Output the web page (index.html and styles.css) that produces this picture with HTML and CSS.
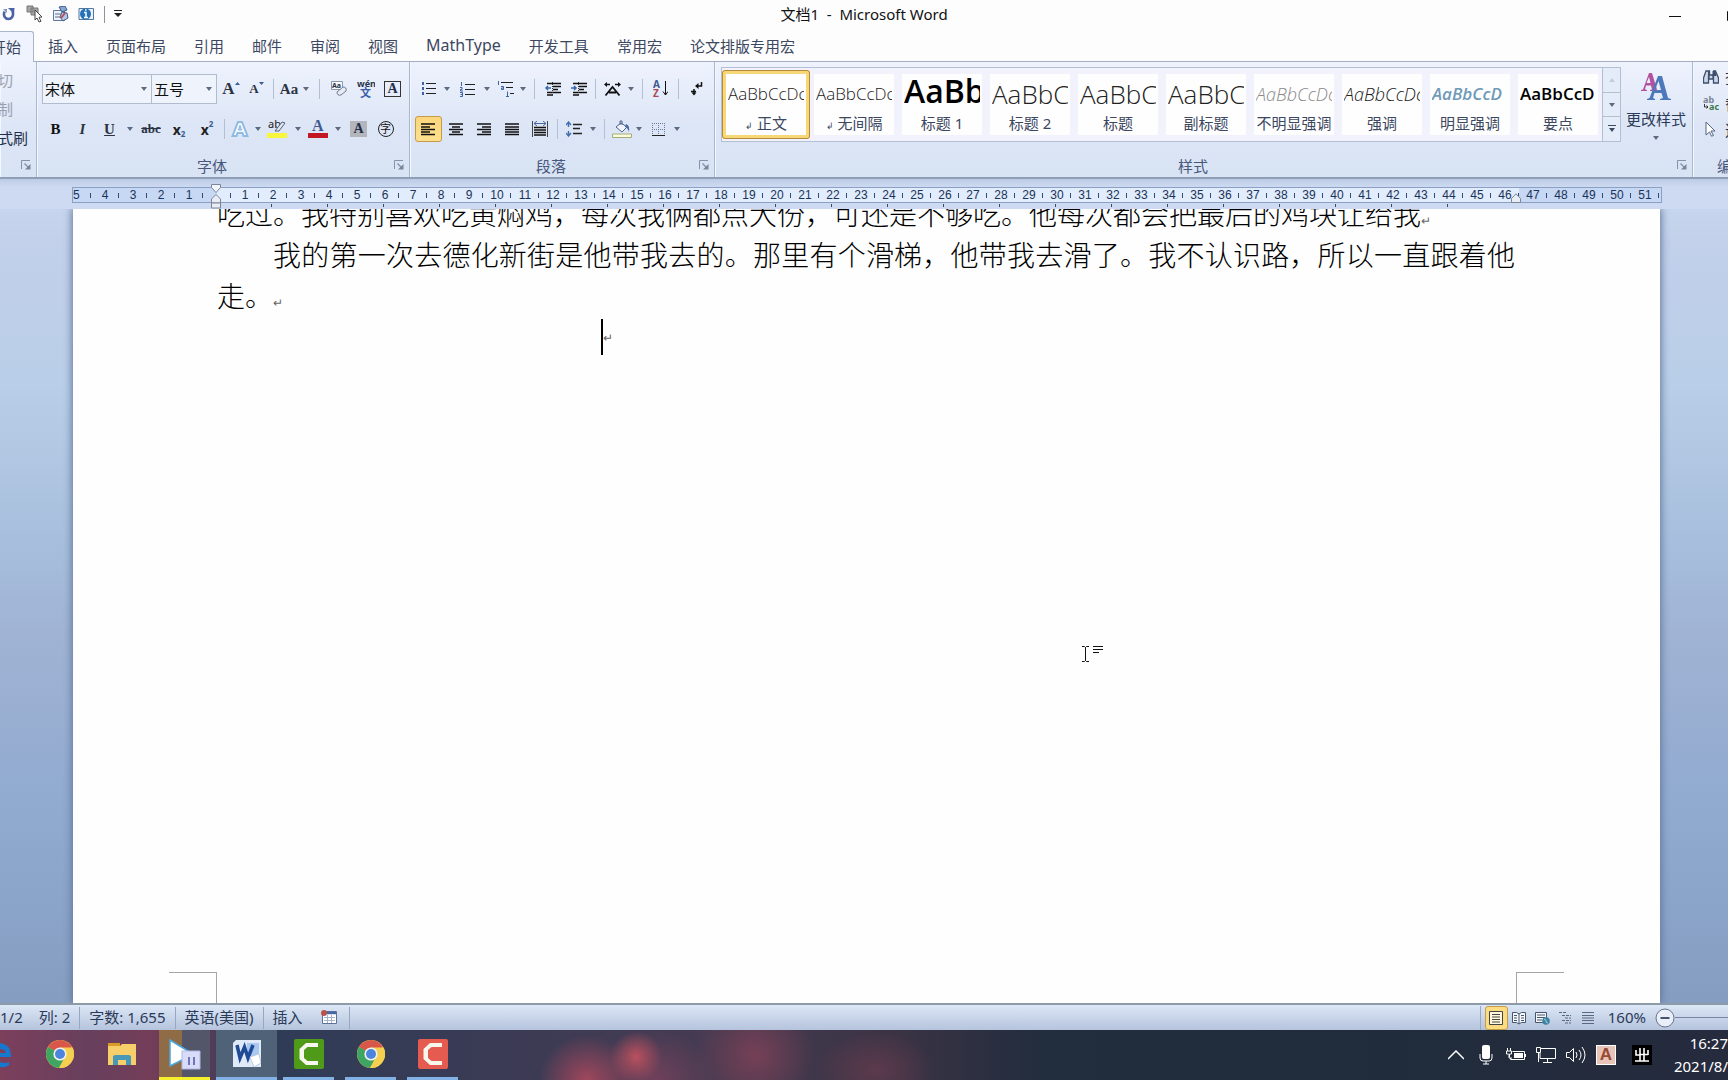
FILE: index.html
```html
<!DOCTYPE html>
<html lang="zh-CN">
<head>
<meta charset="utf-8">
<title>文档1 - Microsoft Word</title>
<link rel="stylesheet" href="styles.css">
</head>
<body>
<svg class="defs" aria-hidden="true">
  <defs>
    <symbol id="caret" viewBox="0 0 6 4"><path d="M0 0h6L3 4z" fill="#5c6b80"/></symbol>
    <symbol id="launch" viewBox="0 0 10 10"><path d="M.5 9V.5H9" fill="none" stroke="#8793a8"/><path d="M3.500 3.500l4 4" stroke="#8793a8" stroke-width="1.500"/><path d="M9.500 4v5.500H4z" fill="#78859c"/></symbol>
    <symbol id="chrome" viewBox="0 0 28 28"><circle cx="14" cy="14" r="14" fill="#f5cf50"/><path d="M14 14L1.900 7A14 14 0 0 1 26.100 7z" fill="#d9564a"/><path d="M1.900 7A14 14 0 0 0 13 28l6-11-5-3z" fill="#3fa562"/><path d="M1.900 7l6 10.500L14 14z" fill="#3fa562"/><path d="M14 7.500h12.400A14 14 0 0 1 13 28l6.500-11z" fill="#f5cf50"/><circle cx="14" cy="14" r="6.600" fill="#f3f1ee"/><circle cx="14" cy="14" r="5" fill="#4d84dd"/></symbol>
    <symbol id="camtasia" viewBox="0 0 30 30"><path d="M24 4H12L5.500 10v10L12 26h12v-4H13.500l-3.500-3v-8l3.500-3H24z" fill="#f7f7ee"/></symbol>
  </defs>
</svg>
<div class="app">
  <header class="titlebar">
    <div class="quick">
      <button aria-label="重复"><svg width="14" height="14" viewBox="0 0 14 14"><path d="M2.500 4.500C1 9 3 12 6.500 12S12 8.500 10.500 4" fill="none" stroke="#4a63a8" stroke-width="2.600"/><path d="M6 1l6.500 0-.5 6z" fill="#4a63a8"/><path d="M1 2h4v4z" fill="#7f94c8"/></svg></button>
      <button aria-label="选择多个对象"><svg width="18" height="18" viewBox="0 0 18 18"><path d="M1 1h6v6H1zM5 3h7v7H5z" fill="#a5a5a5" stroke="#777"/><path d="M9 5l7 7-3 .3 2 4-2 .7-2-4-2 2z" fill="#fff" stroke="#444"/></svg></button>
      <button aria-label="宏"><svg width="17" height="17" viewBox="0 0 17 17"><path d="M1.500 4.500h11v10h-11z" fill="#eef3fb" stroke="#60779f"/><path d="M3 8h7M3 11h5" stroke="#5d7196"/><path d="M7 1l6-1 2 4-5 2z" fill="#86a7d3" stroke="#3e5d8d"/><path d="M10 6l5 1 1 5-5 3-3-4z" fill="#b6c7e2" stroke="#3e5d8d"/><path d="M9 12l4-5" stroke="#bd4d53" stroke-width="2"/></svg></button>
      <button aria-label="文档信息"><svg width="17" height="16" viewBox="0 0 17 16"><path d="M1 2.500h8v11H1zM9 2.500h6.500v11H9z" fill="#e9f1fb" stroke="#55769e"/><circle cx="7.500" cy="8" r="5.500" fill="#2672b8"/><path d="M6 6.500h2V11m-2 .500h4M7 4h1.500" stroke="#fff" stroke-width="1.500" fill="none"/></svg></button>
      <span class="qsep"></span>
      <button aria-label="自定义快速访问工具栏" class="more"><svg width="8" height="8" viewBox="0 0 8 8"><path d="M0 .5h8" stroke="#222"/><path d="M0 3h8L4 7z" fill="#222"/></svg></button>
    </div>
    <h1>文档1&nbsp; - &nbsp;Microsoft Word</h1>
    <div class="winbtns">
      <button aria-label="最小化"><svg width="12" height="12" viewBox="0 0 12 12"><path d="M0 6.500h12" stroke="#111"/></svg></button>
      <button aria-label="最大化" class="max"><svg width="10" height="10" viewBox="0 0 10 10"><path d="M.5 .5h9v9h-9z" fill="none" stroke="#111"/></svg></button>
    </div>
  </header>

  <nav class="tabs">
    <button class="active"><span>开始</span></button>
    <button>插入</button><button>页面布局</button><button>引用</button><button>邮件</button><button>审阅</button><button>视图</button><button class="latin">MathType</button><button>开发工具</button><button>常用宏</button><button>论文排版专用宏</button>
  </nav>

  <div class="ribbon">
    <section class="group clip">
      <div class="cliplist"><button class="off">剪切</button><button class="off">复制</button><button>格式刷</button></div>
      <footer><span></span><button class="launcher" aria-label="剪贴板选项"><svg width="10" height="10"><use href="#launch"/></svg></button></footer>
    </section>

    <section class="group font">
      <div class="rows">
        <div class="row">
          <div class="combo face"><input aria-label="字体" value="宋体"><svg width="6" height="4"><use href="#caret"/></svg></div>
          <div class="combo size"><input aria-label="字号" value="五号"><svg width="6" height="4"><use href="#caret"/></svg></div>
          <button class="w24 serif" aria-label="增大字体">A<svg class="sup" width="5" height="4" viewBox="0 0 5 4"><path d="M0 3l2.500-3L5 3z" fill="#3a5c93"/></svg></button>
          <button class="w27 serif small" aria-label="缩小字体">A<svg class="sup" width="5" height="4" viewBox="0 0 5 4"><path d="M0 0h5L2.500 3z" fill="#3a5c93"/></svg></button>
          <i class="sep s6"></i>
          <button class="w37 serif mid" aria-label="更改大小写">Aa<svg width="6" height="4"><use href="#caret"/></svg></button>
          <i class="sep s12"></i>
          <button class="w27" aria-label="清除格式"><svg width="18" height="18" viewBox="0 0 18 18"><path d="M1.500 1.500h11v8h-11z" fill="#f5f8fd" stroke="#8c97aa"/><text x="2" y="8" class="t7">Aa</text><path d="M7 12l6-5q4 0 3 4l-5 4q-4 1-4-3z" fill="#e8ebf1" stroke="#6d7a90"/></svg></button>
          <button class="w27" aria-label="拼音指南"><svg width="18" height="18" viewBox="0 0 18 18"><text x="0" y="7" class="t8">wén</text><text x="3" y="17" class="t11">文</text></svg></button>
          <button class="w27" aria-label="字符边框"><span class="boxed">A</span></button>
        </div>
        <div class="row">
          <button class="w27 serif mid heavy" aria-label="加粗">B</button>
          <button class="w27 serif mid ital" aria-label="倾斜">I</button>
          <button class="w27 serif mid under" aria-label="下划线">U</button>
          <button class="w14" aria-label="下划线样式"><svg width="6" height="4"><use href="#caret"/></svg></button>
          <button class="w28 serif strike" aria-label="删除线">abc</button>
          <button class="w28 xs" aria-label="下标">x<sub>2</sub></button>
          <button class="w28 xs" aria-label="上标">x<sup>2</sup></button>
          <i class="sep s6"></i>
          <button class="w26" aria-label="文本效果"><svg width="18" height="18" viewBox="0 0 18 18"><path d="M1.500 16L7 2h4l5.500 14h-4l-1-3h-5l-1 3z" fill="#f4f9ff" stroke="#8fbbe0" stroke-width="2"/><path d="M7.500 10L9 5.500l1.500 4.500z" fill="#cfe0f4" stroke="#7db1dd"/></svg></button>
          <button class="w10" aria-label="文本效果选项"><svg width="6" height="4"><use href="#caret"/></svg></button>
          <button class="w28" aria-label="突出显示"><svg width="22" height="20" viewBox="0 0 22 20"><text x="2" y="9" class="t11 dark">ab</text><path d="M9 12l7-9 3 1-6 8z" fill="#dfe7f4" stroke="#516079"/><path d="M1 14h20v5H1z" fill="#f8f53c"/></svg></button>
          <button class="w14" aria-label="突出显示颜色"><svg width="6" height="4"><use href="#caret"/></svg></button>
          <button class="w26" aria-label="字体颜色"><svg width="20" height="20" viewBox="0 0 20 20"><text x="4" y="12" class="t16 blue">A</text><path d="M0 14h20v5H0z" fill="#c21824"/></svg></button>
          <button class="w14" aria-label="字体颜色选项"><svg width="6" height="4"><use href="#caret"/></svg></button>
          <button class="w27" aria-label="字符底纹"><span class="shaded">A</span></button>
          <button class="w27" aria-label="带圈字符"><span class="circled">字</span></button>
        </div>
      </div>
      <footer><span>字体</span><button class="launcher" aria-label="字体选项"><svg width="10" height="10"><use href="#launch"/></svg></button></footer>
    </section>

    <section class="group para">
      <div class="rows">
        <div class="row">
          <button class="w27" aria-label="项目符号"><svg width="14" height="14" viewBox="0 0 14 14"><path d="M4 1.500h10M4 6.500h10M4 11.500h10" stroke="#222"/><path d="M0 0h2v3H0zM0 5h2v3H0zM0 10h2v3H0z" fill="#3d62a5"/></svg></button>
          <button class="w10" aria-label="项目符号库"><svg width="6" height="4"><use href="#caret"/></svg></button>
          <button class="w30" aria-label="编号"><svg width="15" height="15" viewBox="0 0 15 15"><path d="M5 2.500h10M5 7.500h10M5 12.500h10" stroke="#222"/><path d="M1.500 0v4M0 5.500h2v2H.5v1.500H3M0 10.500h2.500v4H0m.5-2h2" stroke="#3d62a5" fill="none"/></svg></button>
          <button class="w10" aria-label="编号库"><svg width="6" height="4"><use href="#caret"/></svg></button>
          <button class="w26" aria-label="多级列表"><svg width="17" height="16" viewBox="0 0 17 16"><path d="M4 1.500h12M9 6.500h7M13 12.500h4" stroke="#222"/><path d="M1.500 0v4M4 5.500h2.500v3H4.500V7H6M10.500 10.500v5M9 15.500h3" stroke="#3d62a5" fill="none"/></svg></button>
          <button class="w10" aria-label="多级列表库"><svg width="6" height="4"><use href="#caret"/></svg></button>
          <i class="sep s12"></i>
          <button class="w26" aria-label="减少缩进量"><svg width="16" height="16" viewBox="0 0 16 16"><path d="M2 2.500h14M8 5.500h8M8 8.500h5M2 11.500h14M2 14h6" stroke="#111" stroke-width="1.500"/><path d="M7.500 1v14" stroke="#333" stroke-dasharray="1 1"/><path d="M6 7H1m2-2L1 7l2 2" stroke="#3569ad" stroke-width="1.500" fill="none"/></svg></button>
          <button class="w26" aria-label="增加缩进量"><svg width="16" height="16" viewBox="0 0 16 16"><path d="M2 2.500h14M8 5.500h8M8 8.500h5M2 11.500h14M2 14h6" stroke="#111" stroke-width="1.500"/><path d="M7.500 1v14" stroke="#333" stroke-dasharray="1 1"/><path d="M0 7h5M3 5l2 2-2 2" stroke="#3569ad" stroke-width="1.500" fill="none"/></svg></button>
          <i class="sep s6"></i>
          <button class="w28" aria-label="中文版式"><svg width="17" height="15" viewBox="0 0 17 15"><path d="M1.500 13.500L8.500 5l7 8.500M5 10.500h7" stroke="#111" stroke-width="1.800" fill="none"/><path d="M2 2.500h4M15 2.500h-4" stroke="#111" stroke-width="1.500"/><path d="M0 2.500L3 0v5zM17 2.500L14 0v5z" fill="#111"/></svg></button>
          <button class="w10" aria-label="中文版式选项"><svg width="6" height="4"><use href="#caret"/></svg></button>
          <i class="sep s12"></i>
          <button class="w24" aria-label="排序"><svg width="15" height="18" viewBox="0 0 15 18"><text x="0" y="8" class="t10 blue">A</text><text x="0" y="17" class="t10 red">Z</text><path d="M12.500 1v14M10 11.500l2.500 3.500 2.500-3.500" stroke="#111" fill="none"/></svg></button>
          <i class="sep s12"></i>
          <button class="w26" aria-label="显示编辑标记"><svg width="12" height="14" viewBox="0 0 12 14"><path d="M10.500 0v4H6M5 9.500H0M3 7v5" stroke="#111" fill="none" stroke-width="1.500"/><path d="M4 4l3.500-3v6zM3 13.500L.5 10.500h5z" fill="#111"/></svg></button>
        </div>
        <div class="row">
          <button class="w27 on" aria-label="左对齐"><svg width="15" height="13" viewBox="0 0 15 13"><path d="M0 1h14M0 4h9M0 6.500h14M0 9h9M0 11.500h14" stroke="#111" stroke-width="1.400"/></svg></button>
          <button class="w28" aria-label="居中"><svg width="14" height="13" viewBox="0 0 14 13"><path d="M0 1h14M3 4h8M0 6.500h14M3 9h8M0 11.500h14" stroke="#111" stroke-width="1.400"/></svg></button>
          <button class="w28" aria-label="右对齐"><svg width="14" height="13" viewBox="0 0 14 13"><path d="M0 1h14M5 4h9M0 6.500h14M5 9h9M0 11.500h14" stroke="#111" stroke-width="1.400"/></svg></button>
          <button class="w28" aria-label="两端对齐"><svg width="14" height="13" viewBox="0 0 14 13"><path d="M0 1h14M0 4h14M0 6.500h14M0 9h14M0 11.500h14" stroke="#111" stroke-width="1.400"/></svg></button>
          <button class="w28" aria-label="分散对齐"><svg width="16" height="16" viewBox="0 0 16 16"><path d="M2 6.500h12M2 9h12M2 11.500h12M2 14h12" stroke="#111" stroke-width="1.400"/><path d="M.5 0v16M15.500 0v16" stroke="#444"/><path d="M2 2.500h12M5 0L2 2.500 5 5M11 0l3 2.500L11 5" stroke="#46699f" fill="none"/></svg></button>
          <i class="sep s6"></i>
          <button class="w28" aria-label="行距"><svg width="16" height="16" viewBox="0 0 16 16"><path d="M7 3.500h9M7 7.500h7M7 12.500h9" stroke="#222" stroke-width="1.300"/><path d="M2.500 1v5M2.500 10v5M0 4l2.500-3L5 4M0 12l2.500 3L5 12" stroke="#3d6fb0" stroke-width="1.400" fill="none"/></svg></button>
          <button class="w10" aria-label="行距选项"><svg width="6" height="4"><use href="#caret"/></svg></button>
          <i class="sep s12"></i>
          <button class="w24" aria-label="底纹"><svg width="20" height="18" viewBox="0 0 20 18"><path d="M4 7l5-4 6 4-5 5z" fill="#f1f5fb" stroke="#51658a"/><path d="M8 5V1h2v4" fill="none" stroke="#51658a"/><path d="M14 4q4 1 3 8-1-4-4-5z" fill="#4a6ba6"/><path d="M.5 14h19v3.500H.5z" fill="#fbfbe0" stroke="#a4ac72"/></svg></button>
          <button class="w10" aria-label="底纹颜色"><svg width="6" height="4"><use href="#caret"/></svg></button>
          <button class="w28" aria-label="边框"><svg width="13" height="13" viewBox="0 0 13 13"><path d="M.5 0v12M6.500 0v12M12.500 0v12M0 .5h13M0 6.500h13" stroke="#6c7a93" stroke-dasharray="1 1"/><path d="M0 12.500h13" stroke="#222"/></svg></button>
          <button class="w10" aria-label="边框选项"><svg width="6" height="4"><use href="#caret"/></svg></button>
        </div>
      </div>
      <footer><span>段落</span><button class="launcher" aria-label="段落选项"><svg width="10" height="10"><use href="#launch"/></svg></button></footer>
    </section>

    <section class="group styles">
      <div class="stylerow">
        <div class="gallery">
          <button class="style sel"><b class="pv">AaBbCcDc</b><span><small>↲</small> 正文</span></button>
          <button class="style"><b class="pv">AaBbCcDc</b><span><small>↲</small> 无间隔</span></button>
          <button class="style"><b class="pv h1">AaBb</b><span>标题 1</span></button>
          <button class="style"><b class="pv h2">AaBbC</b><span>标题 2</span></button>
          <button class="style"><b class="pv h2">AaBbC</b><span>标题</span></button>
          <button class="style"><b class="pv h2">AaBbC</b><span>副标题</span></button>
          <button class="style"><b class="pv em faint">AaBbCcDc</b><span>不明显强调</span></button>
          <button class="style"><b class="pv em">AaBbCcDc</b><span>强调</span></button>
          <button class="style"><b class="pv em strong blue">AaBbCcD</b><span>明显强调</span></button>
          <button class="style"><b class="pv strong">AaBbCcD</b><span>要点</span></button>
          <div class="scroll">
            <button aria-label="上一行" disabled><svg width="6" height="4" viewBox="0 0 6 4"><path d="M0 4h6L3 0z" fill="#c3ccdb"/></svg></button>
            <button aria-label="下一行"><svg width="6" height="4"><use href="#caret"/></svg></button>
            <button aria-label="其他"><svg width="8" height="8" viewBox="0 0 8 8"><path d="M0 .5h8" stroke="#3b4a63"/><path d="M1 3h6L4 7z" fill="#3b4a63"/></svg></button>
          </div>
        </div>
        <button class="change">
          <svg width="30" height="30" viewBox="0 0 30 30"><path d="M0 19v-1l2-.5L8 1h3l5 16.500-3 1.500H9v-1l2-.5-1-4H5l-1 4 2 .5v1zM5.500 11h4L8 5z" fill="#b2529f"/><path d="M6 28v-1l2.500-1L17 4h4l6 22 3 1v1H19v-1l3-1-1.500-5h-7L12 26l2 1v1zM14 18h6l-2.500-9z" fill="#4d79bb"/></svg>
          <span>更改样式</span>
          <svg width="6" height="4"><use href="#caret"/></svg>
        </button>
      </div>
      <footer><span>样式</span><button class="launcher" aria-label="样式选项"><svg width="10" height="10"><use href="#launch"/></svg></button></footer>
    </section>

    <section class="group edit">
      <div class="editlist">
        <button><svg width="16" height="14" viewBox="0 0 16 14"><path d="M2.500 1h3v4h1V1h-1M10 1h3M3 1L.5 8v5h5V6M12.500 1l3 7v5h-5V6M6 5h4v4H6z" fill="#cbd6e8" stroke="#3c4e6e" stroke-width="1.300"/><path d="M9.500 1h3l1 5h-4z" fill="#3c4e6e"/></svg>查找</button>
        <button><svg width="16" height="16" viewBox="0 0 16 16"><text x="0" y="8" class="t9 dim">ab</text><text x="6" y="15" class="t9 green">ac</text><path d="M1.500 9v3H5M3.500 10.500L5 12l-1.500 1.500" fill="none" stroke="#333"/></svg>替换</button>
        <button><svg width="16" height="16" viewBox="0 0 16 16"><path d="M3 1l9 9H8l2.500 4.500-2 .7L6.500 11 3 14z" fill="#fff" stroke="#56657f"/></svg>选择</button>
      </div>
      <footer><span>编辑</span></footer>
    </section>
  </div>

  <main class="desk">
    <div class="rulerband">
      <div class="ruler">
        <ol>
          <li class="out">5</li><li class="out">4</li><li class="out">3</li><li class="out">2</li><li class="out">1</li><li class="zero"></li><li>1</li><li>2</li><li>3</li><li>4</li><li>5</li><li>6</li><li>7</li><li>8</li><li>9</li><li>10</li><li>11</li><li>12</li><li>13</li><li>14</li><li>15</li><li>16</li><li>17</li><li>18</li><li>19</li><li>20</li><li>21</li><li>22</li><li>23</li><li>24</li><li>25</li><li>26</li><li>27</li><li>28</li><li>29</li><li>30</li><li>31</li><li>32</li><li>33</li><li>34</li><li>35</li><li>36</li><li>37</li><li>38</li><li>39</li><li>40</li><li>41</li><li>42</li><li>43</li><li>44</li><li>45</li><li>46</li><li class="out">47</li><li class="out">48</li><li class="out">49</li><li class="out">50</li><li class="out">51</li><li class="out end"></li>
        </ol>
        <svg class="indent left" width="10" height="25" viewBox="0 0 10 25"><path d="M.5 .5h9v3L5 8.500l-4.500-5z" fill="#f2f5fa" stroke="#7b8798"/><path d="M.5 19v-4L5 10.500l4.500 4.500v4z" fill="#e9eef6" stroke="#7b8798"/><path d="M.5 19h9v5h-9z" fill="#e9eef6" stroke="#7b8798"/></svg>
        <svg class="indent right" width="10" height="10" viewBox="0 0 10 10"><path d="M.5 9.500v-4L5 .8l4.500 4.700v4z" fill="#e9eef6" stroke="#7b8798"/></svg>
      </div>
      <div class="stops"></div>
    </div>
    <article class="page">
      <div class="text">
        <p class="cont">吃过。我特别喜欢吃黄焖鸡，每次我俩都点大份，可还是不够吃。他每次都会把最后的鸡块让给我<span class="ret">↵</span></p>
        <p>我的第一次去德化新街是他带我去的。那里有个滑梯，他带我去滑了。我不认识路，所以一直跟着他走。<span class="ret">↵</span></p>
        <p class="blank"><span class="insert"></span><span class="ret">↵</span></p>
      </div>
      <div class="crops"><i></i><i></i></div>
      <svg class="pointer" width="22" height="18" viewBox="0 0 22 18"><path d="M1 1.500h2.500l1 1 1-1H8M4.500 2v14M1 16.500h2.500l1-1 1 1H8" fill="none" stroke="#111"/><path d="M12 1.500h10M12 4.500h10M12 7.500h6" stroke="#111"/></svg>
    </article>
  </main>

  <div class="status">
    <span class="cell first">1/2</span><span class="cell">列: 2</span><span class="cell bar">字数: 1,655</span><span class="cell bar">英语(美国)</span><span class="cell bar">插入</span>
    <button class="macro" aria-label="录制宏"><svg width="16" height="14" viewBox="0 0 16 14"><path d="M1.500 1.500h14v12h-14z" fill="#fff" stroke="#5c7199"/><path d="M2 3h13" stroke="#4669a5" stroke-width="2.500"/><path d="M3 7.500h11M3 10.500h11M6.500 5v8M10.500 5v8" stroke="#a7b3c8"/><circle cx="3" cy="3" r="3" fill="#b95349"/></svg></button>
    <div class="views">
      <button class="on" aria-label="页面视图"><svg width="14" height="14" viewBox="0 0 14 14"><path d="M.5 .5h13v13H.5z" fill="#fff8dd" stroke="#444"/><path d="M3 3.500h8M3 6h8M3 8.500h8M3 11h8" stroke="#444"/></svg></button>
      <button aria-label="阅读版式"><svg width="14" height="14" viewBox="0 0 14 14"><path d="M.5 1.500h4L7 3l2.500-1.500h4v10h-4L7 13l-2.500-1.500h-4zM7 3v10" fill="#f5f7fb" stroke="#45556f"/><path d="M2 4.500h3M2 7h3M2 9.500h3M9 4.500h3M9 7h3M9 9.500h3" stroke="#45556f"/></svg></button>
      <button aria-label="Web 版式"><svg width="15" height="14" viewBox="0 0 15 14"><path d="M.5 1.500h11v10H.5z" fill="#f5f7fb" stroke="#45556f"/><path d="M2 4h8M2 6.500h8M2 9h5" stroke="#45556f"/><circle cx="11" cy="10" r="3.800" fill="#3c82a8"/><path d="M9 8q2 0 2 2t2 2" stroke="#a7d8bd" fill="none"/></svg></button>
      <button aria-label="大纲视图"><svg width="13" height="12" viewBox="0 0 13 12"><path d="M0 .5h8M3 3.500h9M6 6h6M3 8.500h9M6 11h6" stroke="#5a6780" stroke-dasharray="3 1"/></svg></button>
      <button aria-label="草稿"><svg width="12" height="12" viewBox="0 0 12 12"><path d="M0 .5h12M0 3.500h12M0 6h12M0 8.500h12M0 11.500h12" stroke="#5a6780"/></svg></button>
    </div>
    <span class="pct">160%</span>
    <button class="minus" aria-label="缩小"><svg width="20" height="20" viewBox="0 0 20 20"><circle cx="10" cy="10" r="9" fill="#e9eef8" stroke="#66748e"/><path d="M5.500 10h9" stroke="#46546e" stroke-width="2"/></svg></button>
    <i class="track"></i>
  </div>

  <footer class="taskbar">
    <button class="edge" aria-label="Edge"><svg width="12" height="28" viewBox="0 0 12 28"><path d="M0 3q10 1 11 12v2H0v5q5 2 9 0v3q-4 3-9 2zM0 9v4h6q-1-4-6-4z" fill="#1479cf"/></svg></button>
    <button class="app-a" aria-label="Chrome"><svg width="28" height="28"><use href="#chrome"/></svg></button>
    <button class="app-a" aria-label="文件资源管理器"><svg width="28" height="24" viewBox="0 0 28 24"><path d="M0 1h12v4H0z" fill="#d99b28"/><path d="M0 4h12l2-2h14v21H0z" fill="#f6cf6b"/><path d="M5 23v-9l2-1h14l2 1v9h-5v-5h-8v5z" fill="#4a98b8"/></svg></button>
    <button class="app-b play" aria-label="播放器"><svg width="36" height="34" viewBox="0 0 36 34"><path d="M3 3l18 11v6L3 29z" fill="#fff" stroke="#49a7dc" stroke-width="1.500"/><path d="M15 14h18v18H15z" fill="#d9dcf8" stroke="#b2b7e6"/><path d="M22 20v8M27 20v8" stroke="#6f76b7" stroke-width="2"/></svg></button>
    <button class="app-w" aria-label="Word"><svg width="28" height="28" viewBox="0 0 28 28"><path d="M3 0h25v27H0V3z" fill="#dfe9f8"/><path d="M14 3h12v13H14z" fill="#a9c8ef"/><path d="M4 5l3 13 4.500-11L15 18l5-13" stroke="#1e4a96" stroke-width="3.500" fill="none"/><path d="M17 17l9-3 2 9-7 4z" fill="#fff" stroke="#c0cadd"/></svg></button>
    <button class="app-b" aria-label="Camtasia"><svg class="green" width="30" height="30"><use href="#camtasia"/></svg></button>
    <button class="app-b" aria-label="Chrome 窗口"><svg width="28" height="28"><use href="#chrome"/></svg></button>
    <button class="app-b" aria-label="Camtasia 录像机"><svg class="coral" width="30" height="30"><use href="#camtasia"/></svg></button>
    <div class="tray">
      <button aria-label="显示隐藏的图标"><svg width="16" height="10" viewBox="0 0 16 10"><path d="M0 9l8-8 8 8" stroke="#fff" stroke-width="1.500" fill="none"/></svg></button>
      <button aria-label="麦克风"><svg width="14" height="20" viewBox="0 0 14 20"><rect x="3" y="0" width="8" height="14" rx="2" fill="#fff"/><path d="M1 9v4q0 3 3 3h6q3 0 3-3V9M7 16v3M4 19h6" stroke="#fff" fill="none"/></svg></button>
      <button aria-label="电池"><svg width="20" height="14" viewBox="0 0 20 14"><path d="M6.500 3.500h12v8h-14V10M19.500 6v3" stroke="#fff" fill="none"/><path d="M8 5h9v5H8z" fill="#fff"/><path d="M1.500 0v3M4.500 0v3M.5 3h5v3H3.500v3M2.500 6H.5V3M3 6v4h3" stroke="#fff" fill="none"/></svg></button>
      <button aria-label="网络"><svg width="20" height="16" viewBox="0 0 20 16"><path d="M5 1.500h14.500v10H4V6M11.500 12v3M7 15.500h9M.5 .5h4v5h-4zM2.500 6v9" stroke="#fff" fill="none"/></svg></button>
      <button aria-label="音量"><svg width="20" height="18" viewBox="0 0 20 18"><path d="M.5 6.500h3l4-4v13l-4-4h-3zM10 6q2 3 0 6M13 4q4 5 0 10M16 1q6 8 0 16" stroke="#fff" fill="none"/></svg></button>
      <button aria-label="输入法 A"><span class="ime a">A</span></button>
      <button class="last" aria-label="输入法"><svg class="ime b" width="20" height="20" viewBox="0 0 20 20"><path d="M8 3v13M12 3v13M8 9.500h8M4 5v5h4M16 5v5M3 16h14" stroke="#fff" stroke-width="1.600" fill="none"/></svg></button>
    </div>
    <div class="clock"><time>16:27</time><time>2021/8/</time></div>
  </footer>
</div>
</body>
</html>
```
FILE: styles.css
```css
* { box-sizing: border-box; }
html, body { margin: 0; height: 100%; overflow: hidden; }
body { font-family: "Noto Sans", "Noto Sans CJK SC", sans-serif; font-size: 15px; color: #1f2f4a; }
button { border: 0; padding: 0; background: none; color: inherit; font: inherit; display: flex; align-items: center; justify-content: center; flex: none; white-space: nowrap; }
svg { flex: none; display: block; }
.defs { position: absolute; width: 0; height: 0; }
.app { display: flex; flex-direction: column; height: 100vh; overflow: hidden; background: #fdfdfe; }

/* Title bar */
.titlebar { display: grid; grid-template-columns: 1fr auto 1fr; align-items: center; height: 31px; flex: none; }
.quick { display: flex; align-items: center; gap: 9px; height: 28px; align-self: start; }
.quick button { width: 17px; height: 20px; }
.quick .qsep { width: 1px; height: 17px; background: #8d929c; }
.quick .more { width: 8px; height: 20px; }
h1 { margin: 0; font-size: 15px; line-height: 28px; font-weight: 400; color: #111; align-self: start; }
.winbtns { display: flex; justify-content: flex-end; gap: 46px; overflow: hidden; }
.winbtns .max { width: 1px; justify-content: flex-start; overflow: hidden; }

/* Tabs */
.tabs { display: flex; height: 31px; flex: none; border-bottom: 1px solid #a3aec4; color: #3c4760; }
.tabs button { height: 30px; padding: 0 14px 2px; }
.tabs .latin { font-size: 16px; }
.tabs .active { width: 34px; height: 31px; padding: 0 12px 2px 0; justify-content: flex-end; overflow: hidden; background: #eef3fd; border: 1px solid #a9b5cb; border-width: 1px 1px 0 0; border-radius: 0 3px 0 0; }

/* Ribbon */
.ribbon { display: flex; height: 117px; flex: none; background: linear-gradient(#eef2fd, #dde6f6 55%, #d8e3f4); border-bottom: 2px solid #8f9fb8; overflow: hidden; }
.group { display: flex; flex-direction: column; flex: none; border-right: 1px solid #a9b7cf; box-shadow: inset 1px 0 #f3f7fe; overflow: hidden; }
.group footer { display: flex; align-items: center; height: 24px; margin-top: auto; padding: 0 5px 0 0; color: #48587c; }
.group footer span { flex: 1; text-align: center; padding-right: 12px; }
.launcher { width: 10px; height: 20px; }
.clip { width: 37px; }
.font { width: 373px; padding-left: 5px; }
.para { width: 305px; padding-left: 5px; }
.styles { flex: 1; min-width: 0; padding-left: 6px; }
.edit { width: 35px; border-right: 0; }
.cliplist { display: flex; flex-direction: column; align-items: flex-end; padding: 3px 8px 0 0; }
.cliplist button { height: 29px; }
.cliplist .off { color: #9aa1ae; padding-right: 15px; }
.rows { display: flex; flex-direction: column; gap: 10px; padding-top: 12px; }
.row { display: flex; align-items: center; height: 30px; }
.row button { height: 26px; }
.w10 { width: 10px; } .w14 { width: 14px; } .w24 { width: 24px; } .w26 { width: 26px; } .w27 { width: 27px; } .w28 { width: 28px; } .w30 { width: 30px; } .w37 { width: 37px; gap: 5px; }
.sep { flex: none; height: 20px; background: linear-gradient(#b3bfd3, #b3bfd3) center / 1px 100% no-repeat; }
.s12 { width: 12px; } .s6 { width: 6px; }
.combo { display: flex; align-items: center; height: 30px; flex: none; background: #eef3fc; border: 1px solid #b1bccf; padding-right: 4px; }
.combo input { flex: 1; min-width: 0; height: 28px; border: 0; padding: 0 2px 2px; background: none; font: inherit; color: #111; outline: 0; }
.face { width: 110px; }
.size { width: 65px; border-left: 0; margin-right: 2px; }
.serif { font-family: "Liberation Serif", serif; font-weight: 700; font-size: 17px; color: #2b3442; }
.serif.small { font-size: 13px; }
.serif.mid { font-size: 15px; }
.serif.heavy { font-weight: 900; color: #111; }
.serif.ital { font-style: italic; }
.serif.under { text-decoration: underline; }
.serif.strike { font-size: 13px; text-decoration: line-through; }
.sup { align-self: flex-start; margin-top: 6px; }
.xs { font-weight: 700; font-size: 14px; color: #222; }
.xs sub, .xs sup { font-size: 8px; color: #3a5c93; line-height: 8px; }
.xs sub { align-self: flex-end; padding-bottom: 4px; }
.xs sup { align-self: flex-start; padding-top: 4px; }
.boxed, .shaded { font: 700 14px/14px "Liberation Serif", serif; padding: 0 2px; border: 1px solid #333; }
.shaded { background: #b4b6bc; border-color: #b4b6bc; }
.circled { width: 16px; height: 16px; border: 1px solid #222; border-radius: 50%; font-size: 11px; line-height: 13px; text-align: center; color: #111; }
.row .on { background: linear-gradient(#fbd67c, #fde08e); border: 1px solid #c79a45; border-radius: 3px; }
text { font-weight: 700; fill: #26344c; }
.t7 { font-size: 7px; } .t8 { font-size: 9px; } .t9 { font-size: 9px; } .t10 { font-size: 10px; } .t11 { font-size: 11px; fill: #3d5ea6; }
.t11.dark { fill: #222; font-weight: 400; }
.t16 { font: 700 16px "Liberation Serif", serif; }
text.blue { fill: #41598f; } text.red { fill: #a84a52; } text.dim { fill: #7b8494; } text.green { fill: #3c7a4a; }

/* Style gallery */
.stylerow { display: flex; justify-content: space-between; padding: 5px 6px 0 0; }
.gallery { display: flex; flex: none; height: 75px; border: 1px solid #b4bfd4; background: #f2f2fc; }
.style { width: 88px; height: 69px; margin-top: 2px; flex-direction: column; justify-content: space-between; border: 4px solid #f2f2fc; background: #fefeff; color: #3c4760; }
.style.sel { border-color: #f6d878; border-radius: 3px; outline: 1px solid #b58a3b; outline-offset: -1px; }
.pv { width: 76px; height: 38px; font: 300 17px/40px "Open Sans", "Noto Sans", sans-serif; color: #222; overflow: hidden; text-align: left; }
.pv.h1 { font-size: 32px; line-height: 34px; font-weight: 600; color: #000; }
.pv.h2 { font-size: 26px; }
.pv.em { font-style: italic; font-size: 18px; }
.pv.faint { color: #8a8a8a; }
.pv.strong { font-weight: 600; color: #000; font-size: 17px; }
.pv.blue { color: #6f9ab8; }
.style span { height: 23px; line-height: 22px; }
.style small { font-size: 9px; line-height: 9px; }
.scroll { display: flex; flex-direction: column; width: 18px; border-left: 1px solid #b4bfd4; background: #e4ecf9; }
.scroll button { flex: 1; }
.scroll button + button { border-top: 1px solid #b4bfd4; }
.change { flex-direction: column; justify-content: flex-start; gap: 5px; padding-top: 5px; color: #2b3a58; }
.change span { line-height: 24px; }
.editlist { display: flex; flex-direction: column; padding: 2px 0 0 10px; }
.editlist button { height: 26px; justify-content: flex-start; gap: 6px; }
.edit footer { padding: 0 0 0 24px; }
.edit footer span { white-space: nowrap; text-align: left; }

/* Ruler and page */
.desk { flex: 1; min-height: 0; display: flex; flex-direction: column; background: linear-gradient(#cad9f1, #c2d0ea 8%, #b9cee8 25%, #a6bedc 45%, #a0b3d4 55%, #8fa9cf 78%, #859dc0); overflow: hidden; }
.rulerband { flex: none; height: 30px; padding: 8px 66px 0 72px; background: linear-gradient(#bccbe4, #cddaf2 8px); }
.ruler { position: relative; height: 16px; border: 1px solid #8ba0c3; overflow: visible; }
.ruler ol { display: flex; margin: 0; padding: 0; list-style: none; height: 14px; overflow: hidden; background: #c6d8f4; }
.ruler li { flex: none; width: 28px; font: 12px/14px "Liberation Sans", sans-serif; text-align: center; color: #1b3358; background: linear-gradient(#33496d, #33496d) right center / 1px 5px no-repeat, #e1ecfc; }
.ruler li:first-child { width: 18px; text-align: left; }
.ruler .out { background-color: #c6d8f4; }
.ruler .zero { background: linear-gradient(#33496d, #33496d) right center / 1px 5px no-repeat, linear-gradient(90deg, #c6d8f4 50%, #e1ecfc 50%); }
.ruler .end { flex: 1; background: #c6d8f4; }
.indent { position: absolute; }
.indent.left { left: 138px; top: -4px; }
.indent.right { left: 1438px; top: 5px; }
.stops { height: 3px; margin: 1px 0 0 144px; width: 1240px; background: repeating-linear-gradient(90deg, transparent 0 55px, #33496d 55px 56px); }
.page { position: relative; flex: 1; min-height: 0; display: flex; flex-direction: column; justify-content: space-between; margin: 0 68px 0 73px; background: #fefefe; box-shadow: 0 0 8px 1px #5f7599; clip-path: inset(0 -10px 0 -10px); }
.text { padding: 0 145px 0 144px; font: 300 28px/41px "Noto Sans CJK SC", sans-serif; color: #000; overflow: hidden; }
.text p { margin: 0; text-indent: 56px; text-align: justify; }
.text .cont { margin-top: -16px; text-indent: 0; white-space: nowrap; }
.ret { font-size: 12px; line-height: 12px; color: #666; }
.text .blank { text-indent: 0; display: flex; align-items: center; justify-content: flex-start; height: 41px; padding-left: 384px; }
.insert { width: 2px; height: 36px; background: #000; }
.crops { display: flex; justify-content: space-between; padding: 0 96px; }
.crops i { width: 48px; height: 31px; border: 1px solid #a5a5aa; border-width: 1px 1px 0 0; }
.crops i + i { border-width: 1px 0 0 1px; }
.pointer { position: absolute; left: 1008px; top: 436px; }

/* Status bar */
.status { flex: none; display: flex; align-items: center; height: 27px; border-top: 2px solid #8d9ba8; background: linear-gradient(#dce8f6, #b5c3dd); color: #2b3a58; }
.cell { height: 22px; line-height: 20px; padding: 0 9px; white-space: nowrap; flex: none; }
.cell.first { padding: 0 7px 0 0; }
.bar, .macro { border-left: 1px solid #98a6c0; }
.cell + .macro { border-left: 0; }
.macro { border-right: 1px solid #98a6c0; padding: 0 12px 2px 9px; height: 22px; }
.views { display: flex; margin-left: auto; padding-left: 4px; border-left: 1px solid #98a6c0; height: 24px; }
.views button { width: 23px; height: 24px; }
.views .on { background: #fbdc80; border: 1px solid #c39c4c; border-radius: 3px; }
.pct { margin: 0 9px 0 8px; height: 22px; line-height: 20px; }
.track { width: 53px; height: 1px; background: #7685a0; }

/* Taskbar */
.taskbar { flex: none; display: flex; align-items: stretch; height: 50px; color: #fff; background:
  radial-gradient(circle at 636px 27px, #b9505e, transparent 26px),
  radial-gradient(ellipse 48px 45px at 587px 50px, #a0475c, transparent),
  radial-gradient(ellipse 60px 50px at 655px 50px, #71405a, transparent),
  radial-gradient(ellipse 60px 60px at 755px 25px, #764056, transparent),
  radial-gradient(ellipse 60px 40px at 875px 40px, #5c3a4c, transparent),
  linear-gradient(90deg, #7c3f5c, #67405d 90px, #743d58 150px, #2f3c56 270px, #3a3b55 480px, #453b52 700px, #3a3344 900px, #222d3e 1040px, #202c3c 1400px, #262b3e); }
.edge { width: 29px; justify-content: flex-start; }
.app-a { width: 62px; }
.app-b { width: 51px; border-bottom: 3px solid #82b1e6; margin-right: 11px; }
.app-w { width: 61px; border-bottom: 3px solid #82b1e6; margin-right: 6px; background: #506278; }
.play { margin: 0 6px; border-color: #f6ef2c; background: linear-gradient(90deg, #8f6c45 23px, #535568 23px); }
.app-w + .app-b { margin-left: 0; }
.app-a, .edge { padding-bottom: 3px; }
.green { background: #4f9a18; border-radius: 2px; }
.coral { background: #e55b50; border-radius: 2px; }
.tray { margin-left: auto; display: flex; align-items: center; gap: 10px; }
.tray button { width: 20px; }
.tray .last { margin-left: 6px; }
.ime { width: 20px; height: 20px; }
.ime.a { border: 1px solid #fff; background: #e8c3b8; color: #984a35; font: 700 17px/18px "Liberation Sans", sans-serif; text-align: center; }
.ime.b { background: #000; }
.clock { flex: none; width: 76px; display: flex; flex-direction: column; align-items: flex-end; font-size: 15px; line-height: 23px; padding-top: 2px; }
```
